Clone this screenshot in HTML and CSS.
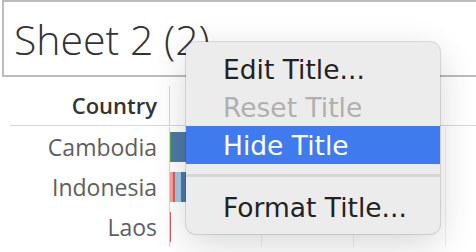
FILE: index.html
```html
<!DOCTYPE html>
<html>
<head>
<meta charset="utf-8">
<link rel="stylesheet" href="styles.css">
</head>
<body>
<div class="page">
  <div class="title-box"><span class="title">Sheet 2 (2)</span></div>
  <div class="chart">
    <div class="row header">
      <div class="label head">Country</div>
      <div class="cell"></div>
    </div>
    <div class="rows">
      <div class="row">
        <div class="label">Cambodia</div>
        <div class="cell plot"><div class="bar"><span class="seg green" style="width:1px"></span><span class="seg dblue" style="width:40px"></span></div></div>
      </div>
      <div class="row">
        <div class="label">Indonesia</div>
        <div class="cell plot"><div class="bar"><span class="seg pink" style="width:3px"></span><span class="seg red" style="width:2px"></span><span class="seg lblue" style="width:6px"></span><span class="seg dblue" style="width:40px"></span></div></div>
      </div>
      <div class="row">
        <div class="label">Laos</div>
        <div class="cell plot"><div class="bar"><span class="seg red" style="width:1px"></span></div></div>
      </div>
    </div>
  </div>
  <div class="menu">
    <div class="item">Edit Title...</div>
    <div class="item disabled">Reset Title</div>
    <div class="item active">Hide Title</div>
    <div class="sep"></div>
    <div class="item">Format Title...</div>
  </div>
</div>
</body>
</html>
```

FILE: styles.css
```css
html, body {
  margin: 0;
  padding: 0;
  background: #ffffff;
  overflow: hidden;
}
.page {
  position: relative;
  width: 476px;
  height: 252px;
  overflow: hidden;
  font-family: "Open Sans", "Liberation Sans", sans-serif;
}
.title-box {
  margin-left: 2px;
  width: 520px;
  height: 73px;
  border: 2px solid #bcbcbc;
  display: flex;
  align-items: center;
  padding-left: 10px;
  box-sizing: content-box;
}
.title {
  font-size: 41px;
  font-weight: 300;
  color: #333333;
  line-height: 1;
  margin-top: 2px;
}
.chart {
  margin-left: 10px;
  margin-top: 9px;
}
.row {
  display: grid;
  grid-template-columns: 160px 1fr;
  height: 40px;
}
.header {
  height: 39px;
  border-bottom: 1px solid #d6d6d6;
}
.rows {
  padding-top: 1px;
}
.label {
  border-right: 1px solid #d6d6d6;
  text-align: right;
  padding-right: 12px;
  font-size: 23px;
  color: #5e5e5e;
  line-height: 40px;
}
.label.head {
  font-weight: 600;
  font-size: 22px;
  color: #333333;
  line-height: 38px;
}
.cell {
  display: flex;
  align-items: center;
}
.plot {
  background-image: repeating-linear-gradient(to right, transparent 0, transparent 91px, #ededed 91px, #ededed 92px);
}
.bar {
  display: flex;
  height: 30px;
}
.seg { display: block; height: 100%; }
.green { background: #59a14f; }
.dblue { background: #4e79a7; }
.pink { background: #f4a49c; }
.red { background: #e15759; }
.lblue { background: #a0cbe8; }

.menu {
  position: absolute;
  left: 186px;
  top: 42px;
  width: 254px;
  height: 192px;
  box-sizing: border-box;
  padding: 8px 0;
  background: #ececec;
  border-radius: 10px;
  box-shadow: 0 0 0 1px rgba(0,0,0,0.12), 0 10px 36px rgba(0,0,0,0.16);
  font-family: "DejaVu Sans", sans-serif;
  font-size: 26.5px;
  color: #222222;
}
.item {
  height: 38px;
  line-height: 40px;
  padding-left: 37px;
  white-space: nowrap;
}
.item.disabled { color: #b0b0b0; }
.item.active { background: #3f7bef; color: #ffffff; }
.sep {
  height: 3px;
  margin: 10px 0 11px;
  background: #d6d6d6;
}
```
